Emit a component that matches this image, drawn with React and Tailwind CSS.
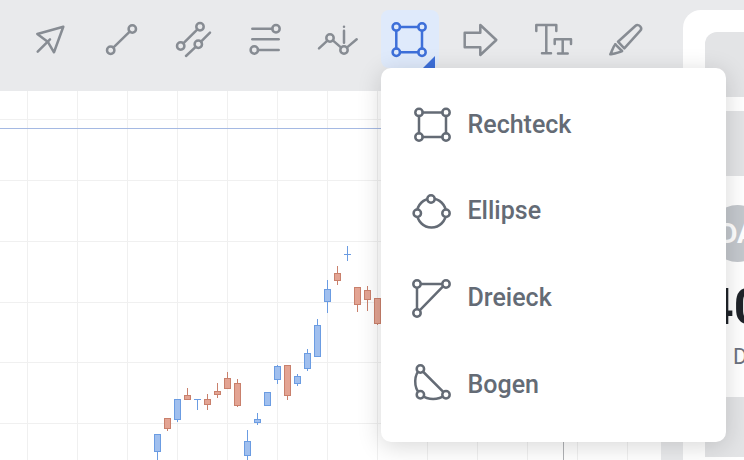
import React from "react";

const gridX = [27, 77, 127, 177, 227, 277, 327, 377, 427, 477, 527, 577, 627];
const gridY = [119, 180, 241, 302, 362, 423];

// [x, high, top, bottom, low, up]
const candles = [
  [157, 434, 434, 451, 460, true],
  [167, 418, 418, 428, 431, false],
  [177, 399, 399, 419, 422, true],
  [187, 388, 395, 399, 399, false],
  [197, 399, 399, 399, 410, true],
  [207, 394, 399, 404, 410, false],
  [217, 383, 391, 394, 398, false],
  [227, 372, 378, 388, 388, false],
  [237, 379, 383, 405, 407, false],
  [247, 430, 441, 455, 460, true],
  [257, 413, 419, 422, 425, true],
  [267, 392, 392, 405, 405, true],
  [277, 365, 366, 379, 384, true],
  [287, 365, 365, 395, 400, false],
  [297, 374, 376, 383, 386, true],
  [307, 349, 353, 368, 371, true],
  [317, 319, 325, 356, 356, true],
  [327, 280, 289, 301, 313, true],
  [337, 266, 273, 280, 285, false],
  [347, 246, 254, 254, 261, true],
  [357, 287, 287, 304, 312, false],
  [367, 286, 290, 299, 311, false],
  [377, 298, 298, 323, 325, false],
];

function Icon({ children, color = "#878c93" }) {
  return (
    <svg width="58" height="58" viewBox="0 0 58 58" fill="none" stroke={color} strokeWidth="2.5" strokeLinecap="round" strokeLinejoin="round">
      {children}
    </svg>
  );
}

function ToolButton({ active, children }) {
  return (
    <div className={active ? "relative w-[58px] h-[58px] rounded-lg bg-[#dfeafb]" : "relative w-[58px] h-[58px] rounded-lg"}>
      {children}
      {active && (
        <svg className="absolute right-[4px] bottom-0" width="12" height="12" viewBox="0 0 12 12">
          <path d="M12 0 L12 12 L0 12 Z" fill="#3d6fd9" />
        </svg>
      )}
    </div>
  );
}

function Chart() {
  return (
    <svg className="block" width="661" height="369" viewBox="0 91 661 369">
      <rect x="0" y="91" width="661" height="369" fill="#ffffff" />
      {gridX.map((x) => (
        <line key={x} x1={x + 0.5} x2={x + 0.5} y1="91" y2="460" stroke="#f0f0f0" />
      ))}
      {gridY.map((y) => (
        <line key={y} x1="0" x2="661" y1={y + 0.5} y2={y + 0.5} stroke="#f0f0f0" />
      ))}
      <line x1="0" x2="661" y1="128.5" y2="128.5" stroke="#a5b9e3" />
      <line x1="563.5" x2="563.5" y1="91" y2="460" stroke="#b0b2b5" />
      {candles.map(([x, hi, top, bottom, lo, up]) => {
        const border = up ? "#6b9ce2" : "#c9806c";
        const fill = up ? "#a0bfee" : "#e3a493";
        return (
          <g key={x}>
            <line x1={x + 0.5} x2={x + 0.5} y1={hi} y2={lo} stroke={border} />
            {top === bottom ? (
              <line x1={x - 3} x2={x + 4} y1={top + 0.5} y2={top + 0.5} stroke={border} />
            ) : (
              <rect x={x - 2.5} y={top + 0.5} width="6" height={bottom - top} fill={fill} stroke={border} />
            )}
          </g>
        );
      })}
    </svg>
  );
}

function MenuItem({ label, children }) {
  return (
    <div className="h-[86.67px] flex items-center pl-[29px]">
      <svg width="42" height="42" viewBox="0 0 42 42" fill="none" stroke="#646b75" strokeWidth="2.5" strokeLinecap="round" strokeLinejoin="round">
        {children}
      </svg>
      <span className="ml-[15.5px] pb-[2px] text-[25px] font-medium text-[#646b75]">{label}</span>
    </div>
  );
}

export default function App() {
  return (
    <div className="relative w-[744px] h-[460px] overflow-hidden flex bg-[#e9eaec] font-[Roboto,sans-serif]">
      <div className="w-[661px] shrink-0 flex flex-col">
        <div className="h-[91px] flex items-start pt-[10px] pl-[21px] gap-[14px]">
          <ToolButton>
            <Icon>
              <path d="M42.3 16.7 L16.3 24 L26.7 31.7 L33 42.3 Z" />
              <path d="M29 29.3 L16.7 41.7" />
            </Icon>
          </ToolButton>
          <ToolButton>
            <Icon>
              <circle cx="39.3" cy="19" r="3.7" />
              <circle cx="17.7" cy="40.3" r="3.7" />
              <path d="M36.7 21.6 L20.3 37.7" />
            </Icon>
          </ToolButton>
          <ToolButton>
            <Icon>
              <circle cx="35" cy="16.7" r="3.7" />
              <circle cx="15.7" cy="36" r="3.7" />
              <path d="M32.4 19.3 L18.3 33.4" />
              <circle cx="33.3" cy="34.3" r="3.7" />
              <path d="M45 22.7 L36 31.6 M30.7 36.9 L21 46" />
            </Icon>
          </ToolButton>
          <ToolButton>
            <Icon>
              <path d="M15.3 18.7 H35.3" />
              <circle cx="39" cy="18.7" r="3.7" />
              <path d="M15.3 29.3 H41.7" />
              <circle cx="17.3" cy="40" r="3.7" />
              <path d="M21 40 H41.7" />
            </Icon>
          </ToolButton>
          <ToolButton>
            <Icon>
              <path d="M10 38.3 L18.4 30.6 M23.8 30.4 L32.2 37.6 M37.8 37.6 L47.7 29.3" />
              <circle cx="21" cy="28" r="3.7" />
              <circle cx="35" cy="40" r="3.7" />
              <path d="M35 20.7 V32.7" />
              <path d="M35 16.7 V16.8" />
            </Icon>
          </ToolButton>
          <ToolButton active>
            <Icon color="#3d6fd9">
              <path d="M19 17 H37.3 M15.3 20.7 V38.6 M41 20.7 V38.6 M19 42.3 H37.3" />
              <circle cx="15.3" cy="17" r="3.7" />
              <circle cx="41" cy="17" r="3.7" />
              <circle cx="15.3" cy="42.3" r="3.7" />
              <circle cx="41" cy="42.3" r="3.7" />
            </Icon>
          </ToolButton>
          <ToolButton>
            <Icon>
              <path d="M11.7 22.7 H27.3 V15 L43.3 30 L27.3 45 V37.3 H11.7 Z" />
            </Icon>
          </ToolButton>
          <ToolButton>
            <Icon>
              <path d="M11.3 21 V15 H31.3 V21 M21.3 15 V43.3 M17 43.3 H26" />
              <path d="M29.7 34 V29.3 H46 V34 M37.7 29.3 V43.5 M33 43.5 H42.7" />
            </Icon>
          </ToolButton>
          <ToolButton>
            <Icon>
              <path d="M38.3 16 C40 14.5 42 15 43.3 16.5 C44.5 18 44.5 19.5 43.3 20.7 L27.3 38.3 L21 31.7 Z" />
              <path d="M18.3 34.3 L25 41" />
              <path d="M18.3 34.3 C16 37 15 41 13.3 44.3 C17 43.7 22 43 25 41" />
            </Icon>
          </ToolButton>
        </div>
        <Chart />
      </div>

      <div className="ml-[22px] mt-[10px] w-[300px] shrink-0 h-[500px] rounded-tl-[18px] bg-white pl-[22px] pt-[22px]">
        <div className="h-[65px] rounded-tl-[12px] bg-[#e3e4e6]" />
        <div className="mt-[14px] h-[65px] bg-[#e3e4e6]" />
        <div className="mt-[29px] ml-[4px] w-[57px] h-[57px] rounded-full bg-[#c4c8cd] flex items-center justify-center text-[28px] font-bold text-white">
          DA
        </div>
        <div className="mt-[16px] text-[50px] leading-[58px] font-bold text-[#1f2329]">40</div>
        <div className="mt-[8px] ml-[28px] text-[22px] leading-[26px] text-[#6b7280]">D</div>
        <div className="mt-[27px] h-[60px] bg-[#e3e4e6]" />
      </div>

      <div className="absolute left-[381px] top-[68px] w-[345px] h-[374px] rounded-[10px] bg-white py-[14px] shadow-[0_4px_24px_rgba(0,0,0,0.16)]">
        <MenuItem label="Rechteck">
          <path d="M12.7 8.4 H32.4 M9 12.1 V29.3 M36 12.1 V29.3 M12.7 33 H32.4" />
          <circle cx="9" cy="8.4" r="3.7" />
          <circle cx="36" cy="8.4" r="3.7" />
          <circle cx="9" cy="33" r="3.7" />
          <circle cx="36" cy="33" r="3.7" />
        </MenuItem>
        <MenuItem label="Ellipse">
          <circle cx="21.5" cy="22" r="14.5" />
          <circle cx="21" cy="8" r="3.7" fill="#fff" />
          <circle cx="7.3" cy="22.3" r="3.7" fill="#fff" />
          <circle cx="36" cy="22.3" r="3.7" fill="#fff" />
        </MenuItem>
        <MenuItem label="Dreieck">
          <path d="M10.7 6 H32 M7 9.7 V31 M32.8 8.7 L9.7 32.3" />
          <circle cx="7" cy="6" r="3.7" fill="#fff" />
          <circle cx="36" cy="6" r="3.7" fill="#fff" />
          <circle cx="7" cy="35" r="3.7" fill="#fff" />
        </MenuItem>
        <MenuItem label="Bogen">
          <path d="M10.4 5 L36 30.7" />
          <path d="M10.4 5 C4 10.3 3 23.3 10.4 30.7" />
          <path d="M10.4 30.7 Q23 39.3 36 30.7" />
          <circle cx="10.4" cy="5" r="3.7" fill="#fff" />
          <circle cx="10.4" cy="30.7" r="3.7" fill="#fff" />
          <circle cx="36" cy="30.7" r="3.7" fill="#fff" />
        </MenuItem>
      </div>
    </div>
  );
}
